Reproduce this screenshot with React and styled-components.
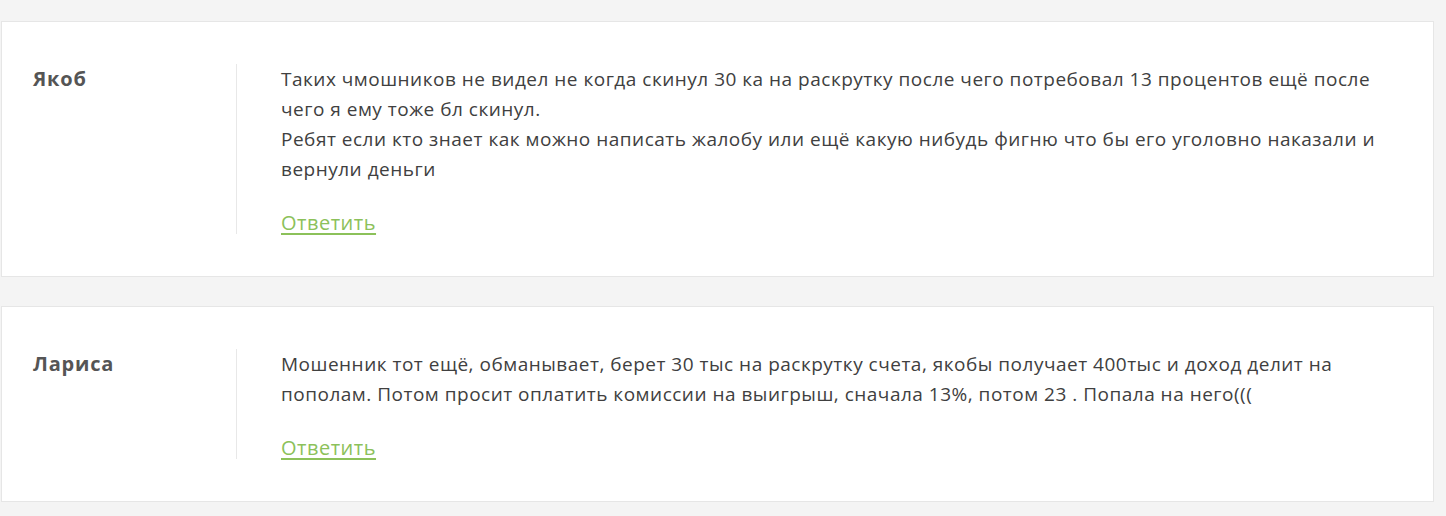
import styled, { createGlobalStyle } from 'styled-components';

const GlobalStyle = createGlobalStyle`
  html, body {
    margin: 0;
    padding: 0;
    background-color: #f4f4f4;
  }
`;

const CommentList = styled.div`
  box-sizing: border-box;
  width: 1446px;
  min-height: 516px;
  padding: 21px 13px 16px 1px;
  display: flex;
  flex-direction: column;
  gap: 29px;
  font-family: 'Open Sans', 'Liberation Sans', sans-serif;
`;

const CommentCard = styled.div`
  box-sizing: border-box;
  width: 1433px;
  background-color: #ffffff;
  border: 1px solid #e6e6e6;
  padding: 42px 44px 42px 31px;
  display: flex;
  align-items: stretch;
`;

const Author = styled.div`
  width: 203px;
  flex-shrink: 0;
  font-size: 20px;
  font-weight: 700;
  line-height: 30px;
  letter-spacing: 0.8px;
  color: #555555;
`;

const Body = styled.div`
  flex: 1;
  border-left: 1px solid #e8e8e8;
  padding-left: 44px;
  display: flex;
  flex-direction: column;
  align-items: flex-start;
`;

const Text = styled.div`
  font-size: 19px;
  line-height: 30px;
  letter-spacing: 0.5px;
  color: #404040;
`;

const ReplyLink = styled.a`
  margin-top: 28px;
  font-size: 20px;
  line-height: 22px;
  letter-spacing: 0.5px;
  color: #8cc15a;
  text-decoration: underline;
  text-underline-offset: 3px;
  cursor: pointer;
`;

const comments = [
  {
    id: 1,
    author: 'Якоб',
    lines: [
      'Таких чмошников не видел не когда скинул 30 ка на раскрутку после чего потребовал 13 процентов ещё после чего я ему тоже бл скинул.',
      'Ребят если кто знает как можно написать жалобу или ещё какую нибудь фигню что бы его уголовно наказали и вернули деньги',
    ],
  },
  {
    id: 2,
    author: 'Лариса',
    lines: [
      'Мошенник тот ещё, обманывает, берет 30 тыс на раскрутку счета, якобы получает 400тыс и доход делит на пополам. Потом просит оплатить комиссии на выигрыш, сначала 13%, потом 23 . Попала на него(((',
    ],
  },
];

function App() {
  return (
    <>
      <GlobalStyle />
      <CommentList>
        {comments.map(comment => (
          <CommentCard key={comment.id}>
            <Author>{comment.author}</Author>
            <Body>
              {comment.lines.map(line => (
                <Text key={line}>{line}</Text>
              ))}
              <ReplyLink>Ответить</ReplyLink>
            </Body>
          </CommentCard>
        ))}
      </CommentList>
    </>
  );
}

export default App;
